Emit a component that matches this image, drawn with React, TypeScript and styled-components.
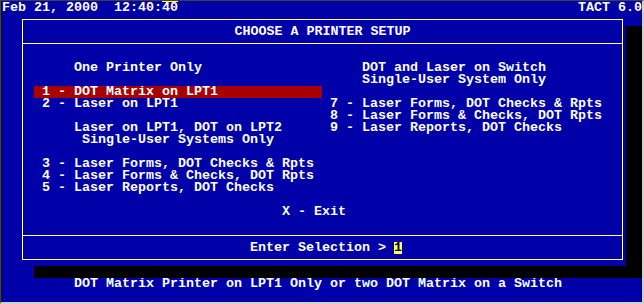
import * as React from "react";
import styled, { createGlobalStyle } from "styled-components";

const GlobalStyle = createGlobalStyle`
  html, body {
    margin: 0;
    padding: 0;
    background: #d4d0c8;
  }
`;

const Screen = styled.div`
  width: 644px;
  height: 304px;
  box-sizing: border-box;
  border-top: 1px solid #404040;
  border-left: 1px solid #404040;
  border-right: 2px solid #d4d0c8;
  border-bottom: 2px solid #d4d0c8;
  padding: 1px 0 0 1px;
  background: #0000a8;
  color: #ffffff;
  font-family: "Liberation Mono", "DejaVu Sans Mono", monospace;
  font-weight: bold;
  font-size: 13.333px;
  line-height: 12px;
  white-space: pre;
  overflow: hidden;
`;

const StatusRow = styled.div`
  display: flex;
  justify-content: space-between;
  width: 640px;
  height: 12px;
`;

const Seconds = styled.span`
  display: inline-block;
  height: 12px;
  box-shadow: 0 -1px 0 #ffff55;
`;

const Window = styled.div`
  margin-left: 16px;
  width: 608px;
  height: 252px;
  box-sizing: border-box;
  padding: 5px 3px 6px 4px;
  background: #0000a8;
  box-shadow: 16px 12px 0 #000000;
`;

const Frame = styled.div`
  height: 100%;
  box-sizing: border-box;
  border: 1px solid #ffffff;
  display: flex;
  flex-direction: column;
`;

const TitleBar = styled.div`
  padding: 6px 0 5px;
  text-align: center;
  border-bottom: 1px solid #ffffff;
`;

const Body = styled.div`
  flex: 1;
  padding: 18px 0 0 11px;
  border-bottom: 1px solid #ffffff;
  display: grid;
  grid-template-columns: 288px 1fr;
  align-content: start;
`;

const Column = styled.div`
  display: flex;
  flex-direction: column;
  gap: 12px;
`;

const Group = styled.div`
  display: flex;
  flex-direction: column;
`;

const Heading = styled.div`
  height: 12px;
  padding-left: 40px;
`;

const Option = styled.div<{ $selected?: boolean }>`
  height: 12px;
  padding-left: 8px;
  background: ${(p) => (p.$selected ? "#a80000" : "transparent")};
`;

const ExitRow = styled.div`
  grid-column: 1 / -1;
  margin-top: 12px;
  height: 12px;
  padding-left: 248px;
`;

const Prompt = styled.div`
  padding: 6px 0 5px 227px;
`;

const Cursor = styled.span`
  display: inline-block;
  width: 8px;
  height: 12px;
  vertical-align: top;
  background: #ffff55;
  color: #000000;
`;

const Footer = styled.div`
  margin-top: 12px;
  padding-left: 72px;
`;

const oneOnly = ["DOT Matrix on LPT1", "Laser on LPT1"];
const twoPorts = [
  "Laser Forms, DOT Checks & Rpts",
  "Laser Forms & Checks, DOT Rpts",
  "Laser Reports, DOT Checks",
];

export default function App() {
  const selected = 1;

  return (
    <>
      <GlobalStyle />
      <Screen>
        <StatusRow>
          <span>
            Feb 21, 2000  12:40:<Seconds>40</Seconds>
          </span>
          <span>TACT 6.0</span>
        </StatusRow>
        <Window>
          <Frame>
            <TitleBar>CHOOSE A PRINTER SETUP</TitleBar>
            <Body>
              <Column>
                <Heading>One Printer Only</Heading>
                <Group>
                  {oneOnly.map((label, i) => (
                    <Option key={label} $selected={i + 1 === selected}>
                      {`${i + 1} - ${label}`}
                    </Option>
                  ))}
                </Group>
                <Group>
                  <Heading>Laser on LPT1, DOT on LPT2</Heading>
                  <Heading> Single-User Systems Only</Heading>
                </Group>
                <Group>
                  {twoPorts.map((label, i) => (
                    <Option key={label}>{`${i + 3} - ${label}`}</Option>
                  ))}
                </Group>
              </Column>
              <Column>
                <Group>
                  <Heading>DOT and Laser on Switch</Heading>
                  <Heading>Single-User System Only</Heading>
                </Group>
                <Group>
                  {twoPorts.map((label, i) => (
                    <Option key={label}>{`${i + 7} - ${label}`}</Option>
                  ))}
                </Group>
              </Column>
              <ExitRow>X - Exit</ExitRow>
            </Body>
            <Prompt>
              Enter Selection &gt; <Cursor>1</Cursor>
            </Prompt>
          </Frame>
        </Window>
        <Footer>DOT Matrix Printer on LPT1 Only or two DOT Matrix on a Switch</Footer>
      </Screen>
    </>
  );
}
